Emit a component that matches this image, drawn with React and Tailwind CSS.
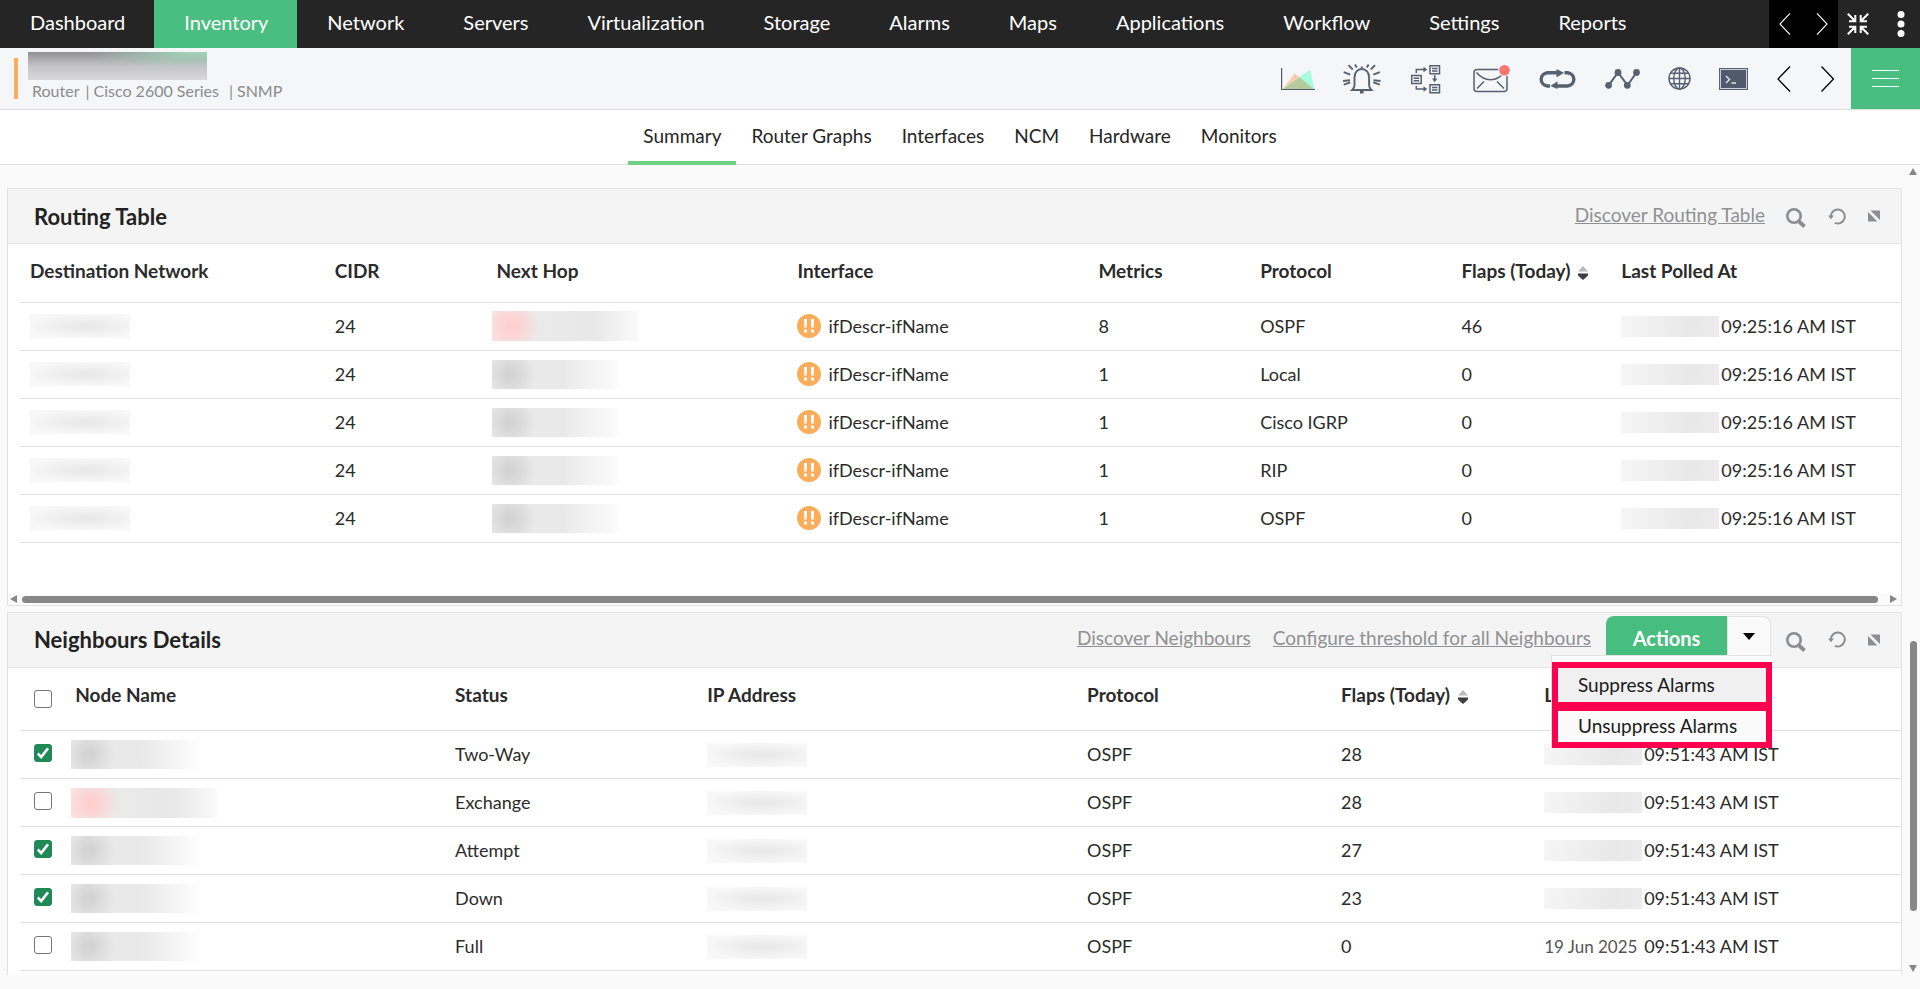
const navItems = [
  "Dashboard",
  "Inventory",
  "Network",
  "Servers",
  "Virtualization",
  "Storage",
  "Alarms",
  "Maps",
  "Applications",
  "Workflow",
  "Settings",
  "Reports",
];

const tabs = ["Summary", "Router Graphs", "Interfaces", "NCM", "Hardware", "Monitors"];

const routes = [
  { metrics: 8, protocol: "OSPF", flaps: 46, alert: true },
  { metrics: 1, protocol: "Local", flaps: 0 },
  { metrics: 1, protocol: "Cisco IGRP", flaps: 0 },
  { metrics: 1, protocol: "RIP", flaps: 0 },
  { metrics: 1, protocol: "OSPF", flaps: 0 },
];

const neighbours = [
  { status: "Two-Way", flaps: 28, checked: true },
  { status: "Exchange", flaps: 28, checked: false, alert: true },
  { status: "Attempt", flaps: 27, checked: true },
  { status: "Down", flaps: 23, checked: true },
  { status: "Full", flaps: 0, checked: false, date: "19 Jun 2025" },
];

/* ---------- masked values ---------- */

function MaskedAddress() {
  return (
    <span className="block h-6 w-[100px] bg-[radial-gradient(ellipse_at_55%_50%,#e9e9e9_10%,#f8f8f8_75%)]" />
  );
}

function MaskedName({ alert }) {
  if (alert) {
    return (
      <span className="-ml-1 block h-[30px] w-[146px] bg-[radial-gradient(circle_at_20px_50%,#ffcfcf_4px,transparent_28px),linear-gradient(90deg,#f9e6e6,#eaeaea_30%,#e8e8e8_70%,#fafafa)]" />
    );
  }
  return (
    <span className="-ml-1 block h-[29px] w-[128px] bg-[radial-gradient(circle_at_18px_50%,#d4d4d4_4px,transparent_26px),linear-gradient(90deg,#e9e9e9,#e9e9e9_55%,#fdfdfd)]" />
  );
}

function MaskedDate() {
  return (
    <span className="block h-[21px] w-[98px] shrink-0 bg-[linear-gradient(100deg,#f6f6f6,#e8e8e8_70%,#ececec)]" />
  );
}

/* ---------- icons ---------- */

function ChevronIcon({ right, className }) {
  return (
    <svg viewBox="0 0 14 26" className={className} fill="none" stroke="currentColor" strokeWidth="1.3">
      <path d={right ? "M1 .5 13 13 1 25.5" : "M13 .5 1 13 13 25.5"} />
    </svg>
  );
}

function CollapseIcon() {
  return (
    <svg viewBox="0 0 22 22" className="h-[22px] w-[22px]" fill="none" stroke="currentColor" strokeWidth="2">
      <path d="M.8.8 8 8M2 8.2h6.300V2M21.200.8 14 8M20 8.200h-6.300V2M.8 21.200 8 14M2 13.800h6.300V20M21.200 21.200 14 14M20 13.800h-6.300V20" />
    </svg>
  );
}

function DotsIcon() {
  return (
    <svg viewBox="0 0 8 26" className="h-[26px] w-2" fill="currentColor">
      <circle cx="4" cy="3.500" r="3.500" />
      <circle cx="4" cy="13" r="3.500" />
      <circle cx="4" cy="22.500" r="3.500" />
    </svg>
  );
}

function AreaChartIcon() {
  return (
    <svg viewBox="0 0 34 24" className="h-6 w-[34px]">
      <path d="M2 22 13.500 6.500 33 22z" fill="#ffc9b0" />
      <path d="M2 22 29 2.500 33.500 22z" fill="#a8fbdc" />
      <path d="M2 22 18.500 10.300 33 22z" fill="#b3cb9f" />
      <path d="M.6 1v21.500H34" fill="none" stroke="#505b6b" strokeWidth="1.200" />
    </svg>
  );
}

function BellIcon() {
  return (
    <svg viewBox="0 0 39 30" className="h-[30px] w-[39px]" fill="none" stroke="#566171" strokeWidth="1.900">
      <path d="M9.200 26c1.600-1.400 2.300-3 2.300-5v-7.500c0-5 3-8.500 7.300-8.500s7.300 3.500 7.300 8.500V21c0 2 .7 3.600 2.300 5zM18.800 5V2.500" />
      <path d="M17 27h3.600v2.500H17z" fill="#566171" stroke="none" />
      <path d="m5.500 1.200 4.200 4.300M12 .5l1.800 3M32 1.200l-4.200 4.300M25.600.5l-1.800 3M.7 8.200l6.500 2.500M0 17l7-.800M.8 20.700l6.500-2.300M36.800 8.200l-6.500 2.500M37.500 17l-7-.8M36.800 20.700l-6.500-2.300" />
    </svg>
  );
}

function FlowIcon() {
  return (
    <svg viewBox="0 0 34 30" className="h-[30px] w-[34px]" fill="none" stroke="#566171" strokeWidth="1.500">
      <path d="M20 1.700h9.500v8H20zM1.700 11.500h9.500v8H1.700zM20 20.700h9.500v8H20z" />
      <path d="M22 4.500h5.500M22 7h5.500M3.700 14.300h5.500M3.700 16.800h5.500M22 23.500h5.500M22 26h5.500M6.300 9V5.500H14M6.300 22v3H14M24.700 11v4" />
      <path d="m13.500 2.800 3.800 2.700-3.800 2.700zM13.500 22.300l3.800 2.700-3.800 2.700zM22 14.500h5.400l-2.700 3.700z" fill="#566171" stroke="none" />
    </svg>
  );
}

function MailIcon() {
  return (
    <svg viewBox="0 0 38 30" className="h-[30px] w-[38px]" fill="none" stroke="#566171" strokeWidth="1.500">
      <rect x="2" y="5.500" width="33" height="22" rx="3" />
      <path d="M4.500 8.500c8 9.500 20 9.500 28 0M5 24.500l7-7M32 24.500l-7-7" />
      <circle cx="32.500" cy="6.200" r="6.400" fill="#f5f6f8" stroke="none" />
      <circle cx="32.500" cy="6.200" r="5.300" fill="#fa7470" stroke="none" />
    </svg>
  );
}

function LoopIcon() {
  return (
    <svg viewBox="0 0 39 20" className="h-5 w-[39px]" fill="none" stroke="#566171" strokeWidth="3.400">
      <path d="M12 17H9.300a7 6.700 0 0 1 0-13.300H19M26.500 3.700h3.200a7 6.700 0 0 1 0 13.300H19" />
      <path d="m18.500 0 7.500 3.800-7.500 4.700zM19.500 12.200 12.300 17l7.200 3z" fill="#566171" stroke="none" />
    </svg>
  );
}

function NodesIcon() {
  return (
    <svg viewBox="0 0 35 20" className="h-5 w-[35px]" fill="#566171">
      <path d="M3.600 16.300 13 3.500l9.500 12.800L31.500 3.500" fill="none" stroke="#566171" strokeWidth="2" />
      <circle cx="3.600" cy="16.300" r="3.400" />
      <circle cx="13" cy="3.500" r="3.400" />
      <circle cx="22.300" cy="16.300" r="3.400" />
      <circle cx="31.500" cy="3.500" r="3.400" />
    </svg>
  );
}

function GlobeIcon() {
  return (
    <svg viewBox="0 0 24 24" className="h-[23px] w-[23px]" fill="none" stroke="#566171" strokeWidth="1.500">
      <circle cx="12" cy="12" r="11" />
      <ellipse cx="12" cy="12" rx="6" ry="11" />
      <path d="M12 1v22M1 12h22M3 6.500h18M3 17.500h18" />
    </svg>
  );
}

function TerminalIcon() {
  return (
    <svg viewBox="0 0 29 22" className="h-[22px] w-[29px]">
      <rect width="29" height="22" fill="#566171" />
      <rect x="1.500" y="1.500" width="26" height="19" fill="#505a6b" stroke="#c8ccd2" />
      <path d="m7 8 3.500 3.500L7 15M12.500 15H17" fill="none" stroke="#e3e6ea" strokeWidth="1.400" />
    </svg>
  );
}

function SearchIcon() {
  return (
    <svg viewBox="0 0 20 20" className="h-5 w-5" fill="none" stroke="#8b8e90">
      <circle cx="8" cy="8" r="6.700" strokeWidth="2.600" />
      <path d="m13 13.500 5.500 5" strokeWidth="3.800" />
    </svg>
  );
}

function RefreshIcon() {
  return (
    <svg viewBox="0 0 18 17" className="h-[17px] w-[18px]" fill="none" stroke="#8b8e90" strokeWidth="2">
      <path d="M2.800 9a7 7 0 1 1 4 5.800" />
      <path d="M0 7.500h6L2.900 11.300z" fill="#8b8e90" stroke="none" />
    </svg>
  );
}

function ExpandIcon() {
  return (
    <svg viewBox="0 0 12 12" className="h-3 w-3" fill="#8b8e90">
      <path d="M2.500.5H12V10zM0 2l9.500 9.500H0z" />
    </svg>
  );
}

function SortIcon() {
  return (
    <svg viewBox="0 0 10 14" className="mt-1 h-3.5 w-2.5 shrink-0">
      <path d="M5 0 10 5.500H0z" fill="#b9b9b9" />
      <path d="M0 7.500h10V9.500L5 14 0 9.500z" fill="#3f3f3f" />
    </svg>
  );
}

function WarningIcon() {
  return (
    <svg viewBox="0 0 24 24" className="h-6 w-6 shrink-0">
      <circle cx="12" cy="12" r="12" fill="#fbad5c" />
      <path d="M7 5h3l-.3 8.500H7.300zM14 5h3l-.3 8.500h-2.400zM7 15.500h3v3H7zM14 15.500h3v3h-3z" fill="#fff" />
    </svg>
  );
}

/* ---------- page ---------- */

function TopNav() {
  return (
    <nav className="flex h-12 shrink-0 bg-[#252525] text-white">
      {navItems.map((item) => (
        <a
          key={item}
          href="#"
          className={
            item === "Inventory"
              ? "flex items-center bg-[#4abd80] pr-[29px] pb-1 pl-[30px] text-[20px]"
              : "flex items-center pr-[29px] pb-1 pl-[30px] text-[20px]"
          }
        >
          {item}
        </a>
      ))}
      <div className="ml-auto flex w-[69px] items-center justify-between bg-black px-2.5">
        <button aria-label="Scroll menu left">
          <ChevronIcon className="h-[22px] w-3" />
        </button>
        <button aria-label="Scroll menu right">
          <ChevronIcon right className="h-[22px] w-3" />
        </button>
      </div>
      <div className="flex w-[82px] items-center justify-between pr-[15px] pl-[9px]">
        <button aria-label="Exit full screen">
          <CollapseIcon />
        </button>
        <button aria-label="More">
          <DotsIcon />
        </button>
      </div>
    </nav>
  );
}

function DeviceHeader() {
  return (
    <header className="flex h-[62px] shrink-0 border-b border-[#dfdfdf] bg-[#f5f6f8]">
      <div className="flex pl-3.5">
        <div className="mt-2.5 h-[41px] w-1 bg-[#fbad5c]" />
        <div className="ml-2.5 pt-1">
          <div className="h-7 w-[179px] bg-[radial-gradient(ellipse_at_95%_0%,#a3d6bb,transparent_45%),linear-gradient(180deg,#919192,#c4c4c6_50%,#d8d9da)]" />
          <p className="flex pl-1 text-[16px] leading-[22px] text-[#8a8c8f]">
            <span>Router</span>
            <span className="pl-1.5">|</span>
            <span className="pl-1">Cisco 2600 Series</span>
            <span className="pl-2.5">|</span>
            <span className="pl-1">SNMP</span>
          </p>
        </div>
      </div>
      <div className="ml-auto flex items-center gap-7 pr-4">
        <button aria-label="Graphs"><AreaChartIcon /></button>
        <button aria-label="Alarms"><BellIcon /></button>
        <button aria-label="Workflows"><FlowIcon /></button>
        <button aria-label="Messages"><MailIcon /></button>
        <button aria-label="Ping"><LoopIcon /></button>
        <button aria-label="Trace route"><NodesIcon /></button>
        <button aria-label="Open in browser"><GlobeIcon /></button>
        <button aria-label="Terminal"><TerminalIcon /></button>
        <button aria-label="Previous device"><ChevronIcon className="h-[26px] w-4" /></button>
        <button aria-label="Next device"><ChevronIcon right className="h-[26px] w-[15px]" /></button>
      </div>
      <button aria-label="Menu" className="flex w-[69px] flex-col items-center justify-center gap-[7px] bg-[#4abd80]">
        <span className="h-px w-[27px] bg-white" />
        <span className="h-px w-[27px] bg-white" />
        <span className="h-px w-[27px] bg-white" />
      </button>
    </header>
  );
}

function TabBar() {
  return (
    <div className="flex h-[55px] shrink-0 justify-center border-b border-[#dfdfdf] bg-white">
      {tabs.map((tab) => (
        <a
          key={tab}
          href="#"
          className={
            tab === "Summary"
              ? "-mb-px flex items-center border-b-4 border-[#6fd084] px-[15px] pt-0.5 text-[19px] text-[#252525]"
              : "-mb-px flex items-center border-b-4 border-transparent px-[15px] pt-0.5 text-[19px] text-[#252525]"
          }
        >
          {tab}
        </a>
      ))}
    </div>
  );
}

function PanelTools() {
  return (
    <>
      <button aria-label="Search" className="mt-1 ml-[21px]"><SearchIcon /></button>
      <button aria-label="Refresh" className="ml-[22px]"><RefreshIcon /></button>
      <button aria-label="Expand" className="mr-[21px] ml-[22px]"><ExpandIcon /></button>
    </>
  );
}

function HeadCell({ children, className, sort }) {
  return (
    <th className={`${className} pl-2.5 text-left text-[19px] font-bold text-[#2b2b2b]`}>
      <span className="flex items-center gap-2 whitespace-nowrap">
        {children}
        {sort && <SortIcon />}
      </span>
    </th>
  );
}

function Cell({ children }) {
  return <td className="pl-2.5 whitespace-nowrap">{children}</td>;
}

function RoutingTable() {
  return (
    <section className="border border-[#e2e2e2] bg-white">
      <div className="flex h-[55px] items-center border-b border-[#e2e2e2] bg-[#f4f4f4]">
        <h2 className="pl-[26px] text-[22px] font-bold text-[#222]">Routing Table</h2>
        <a href="#" className="ml-auto pb-0.5 text-[19px] text-[#8f9193] underline">Discover Routing Table</a>
        <PanelTools />
      </div>
      <div className="pb-[51px] pl-3">
        <table className="w-full table-fixed text-[18px] text-[#2b2b2b]">
          <thead>
            <tr className="h-[58px] border-b border-[#e2e2e2]">
              <HeadCell className="w-[16.2%] pb-1">Destination Network</HeadCell>
              <HeadCell className="w-[8.6%] pb-1">CIDR</HeadCell>
              <HeadCell className="w-[16%] pb-1">Next Hop</HeadCell>
              <HeadCell className="w-[16%] pb-1">Interface</HeadCell>
              <HeadCell className="w-[8.6%] pb-1">Metrics</HeadCell>
              <HeadCell className="w-[10.7%] pb-1">Protocol</HeadCell>
              <HeadCell className="w-[8.5%] pb-1" sort>Flaps (Today)</HeadCell>
              <HeadCell className="w-[15.4%] pb-1">Last Polled At</HeadCell>
            </tr>
          </thead>
          <tbody>
            {routes.map((route, index) => (
              <tr key={index} className="h-12 border-b border-[#e2e2e2]">
                <Cell><MaskedAddress /></Cell>
                <Cell>24</Cell>
                <Cell><MaskedName alert={route.alert} /></Cell>
                <Cell>
                  <span className="flex items-center gap-[7px]">
                    <WarningIcon />
                    ifDescr-ifName
                  </span>
                </Cell>
                <Cell>{route.metrics}</Cell>
                <Cell>{route.protocol}</Cell>
                <Cell>{route.flaps}</Cell>
                <Cell>
                  <span className="flex items-center gap-0.5">
                    <MaskedDate />
                    09:25:16 AM IST
                  </span>
                </Cell>
              </tr>
            ))}
          </tbody>
        </table>
      </div>
      <div className="flex h-[11px] items-center bg-[#fafafa] pr-1 pl-0.5">
        <svg viewBox="0 0 7 8" className="h-2 w-[7px]"><path d="M7 0v8L0 4z" fill="#878787" /></svg>
        <div className="mr-3 ml-[5px] h-[7px] flex-1 rounded-full bg-[#878787]" />
        <svg viewBox="0 0 7 8" className="h-2 w-[7px]"><path d="M0 0v8l7-4z" fill="#878787" /></svg>
      </div>
    </section>
  );
}

function ActionsMenu() {
  return (
    <div className="relative ml-[15px] flex h-[55px] pt-1">
      <button className="h-[39px] w-[121px] rounded-tl-lg bg-[#48bd80] pt-1 text-[20px] font-bold text-white">
        Actions
      </button>
      <button
        aria-label="Show actions"
        className="flex h-11 w-11 items-center justify-center rounded-tr-lg border border-b-0 border-[#e2e2e2] bg-[#fafafa] pb-1"
      >
        <svg viewBox="0 0 12 7" className="h-[7px] w-3"><path d="M0 0h12L6 7z" /></svg>
      </button>
      <ul className="absolute top-[43px] -right-px z-10 w-[221px] border-t border-l border-[#e2e2e2] bg-[#fafafa] pt-1.5">
        <li className="border-[6px] border-[#ff0050] bg-[#f0f0f0]">
          <button className="block h-[34px] w-full pl-5 text-left text-[19px] text-[#1a1a1a]">Suppress Alarms</button>
        </li>
        <li className="-mt-[3px] border-[6px] border-[#ff0050] bg-[#fafafa]">
          <button className="block h-[31px] w-full pl-5 text-left text-[19px] text-[#1a1a1a]">Unsuppress Alarms</button>
        </li>
      </ul>
    </div>
  );
}

function CheckBox({ label, checked }) {
  return (
    <span className="relative block h-[18px] w-[18px]">
      <input
        type="checkbox"
        aria-label={label}
        defaultChecked={checked}
        className="peer block h-[18px] w-[18px] appearance-none rounded-[3px] border border-[#767676] bg-white checked:border-[#1f8a55] checked:bg-[#1f8a55]"
      />
      <svg
        viewBox="0 0 18 18"
        className="pointer-events-none absolute inset-0 hidden peer-checked:block"
        fill="none"
        stroke="#fff"
        strokeWidth="2.600"
      >
        <path d="m3.800 9.500 3.400 3.600L14 4.300" />
      </svg>
    </span>
  );
}

function NeighboursDetails() {
  return (
    <section className="mt-1.5 border border-[#e2e2e2] bg-white">
      <div className="flex h-[55px] items-center border-b border-[#e2e2e2] bg-[#f4f4f4]">
        <h2 className="pl-[26px] text-[22px] font-bold text-[#222]">Neighbours Details</h2>
        <a href="#" className="ml-auto pb-0.5 text-[19px] text-[#8f9193] underline">Discover Neighbours</a>
        <a href="#" className="ml-[22px] pb-0.5 text-[19px] text-[#8f9193] underline">
          Configure threshold for all Neighbours
        </a>
        <ActionsMenu />
        <div className="-ml-1.5 flex items-center">
          <PanelTools />
        </div>
      </div>
      <div className="pb-10 pl-3">
        <table className="w-full table-fixed text-[18px] text-[#2b2b2b]">
          <thead>
            <tr className="h-[63px] border-b border-[#e2e2e2]">
              <th className="w-[2.4%] pl-3.5"><CheckBox label="Select all" /></th>
              <HeadCell className="w-[20.2%] pb-2">Node Name</HeadCell>
              <HeadCell className="w-[13.4%] pb-2">Status</HeadCell>
              <HeadCell className="w-[20.2%] pb-2">IP Address</HeadCell>
              <HeadCell className="w-[13.5%] pb-2">Protocol</HeadCell>
              <HeadCell className="w-[10.8%] pb-2" sort>Flaps (Today)</HeadCell>
              <HeadCell className="w-[19.5%] pb-2">Last Polled At</HeadCell>
            </tr>
          </thead>
          <tbody>
            {neighbours.map((node) => (
              <tr key={node.status} className="h-12 border-b border-[#e2e2e2]">
                <td className="pb-1 pl-3.5"><CheckBox label={node.status} checked={node.checked} /></td>
                <Cell><MaskedName alert={node.alert} /></Cell>
                <Cell>{node.status}</Cell>
                <Cell><MaskedAddress /></Cell>
                <Cell>OSPF</Cell>
                <Cell>{node.flaps}</Cell>
                <Cell>
                  <span className="flex items-center gap-0.5">
                    {node.date ? (
                      <span className="w-[98px] text-[17px] text-[#555]">{node.date}</span>
                    ) : (
                      <MaskedDate />
                    )}
                    09:51:43 AM IST
                  </span>
                </Cell>
              </tr>
            ))}
          </tbody>
        </table>
      </div>
    </section>
  );
}

function PageScrollbar() {
  return (
    <div className="flex w-[18px] shrink-0 flex-col items-center py-[3px] pl-1">
      <svg viewBox="0 0 8 7" className="h-[7px] w-2"><path d="M0 7h8L4 0z" fill="#878787" /></svg>
      <div className="flex-[467]" />
      <div className="w-[7px] flex-[271] rounded-full bg-[#878787]" />
      <div className="flex-[54]" />
      <svg viewBox="0 0 8 7" className="h-[7px] w-2"><path d="M0 0h8L4 7z" fill="#878787" /></svg>
    </div>
  );
}

function App() {
  return (
    <div className="flex h-screen flex-col overflow-hidden bg-[#fafafa] pb-3.5 font-[Lato,sans-serif]">
      <TopNav />
      <DeviceHeader />
      <TabBar />
      <div className="flex min-h-0 flex-1">
        <main className="min-w-0 flex-1 overflow-hidden pt-[23px] pl-[7px]">
          <RoutingTable />
          <NeighboursDetails />
        </main>
        <PageScrollbar />
      </div>
    </div>
  );
}

export default App;
